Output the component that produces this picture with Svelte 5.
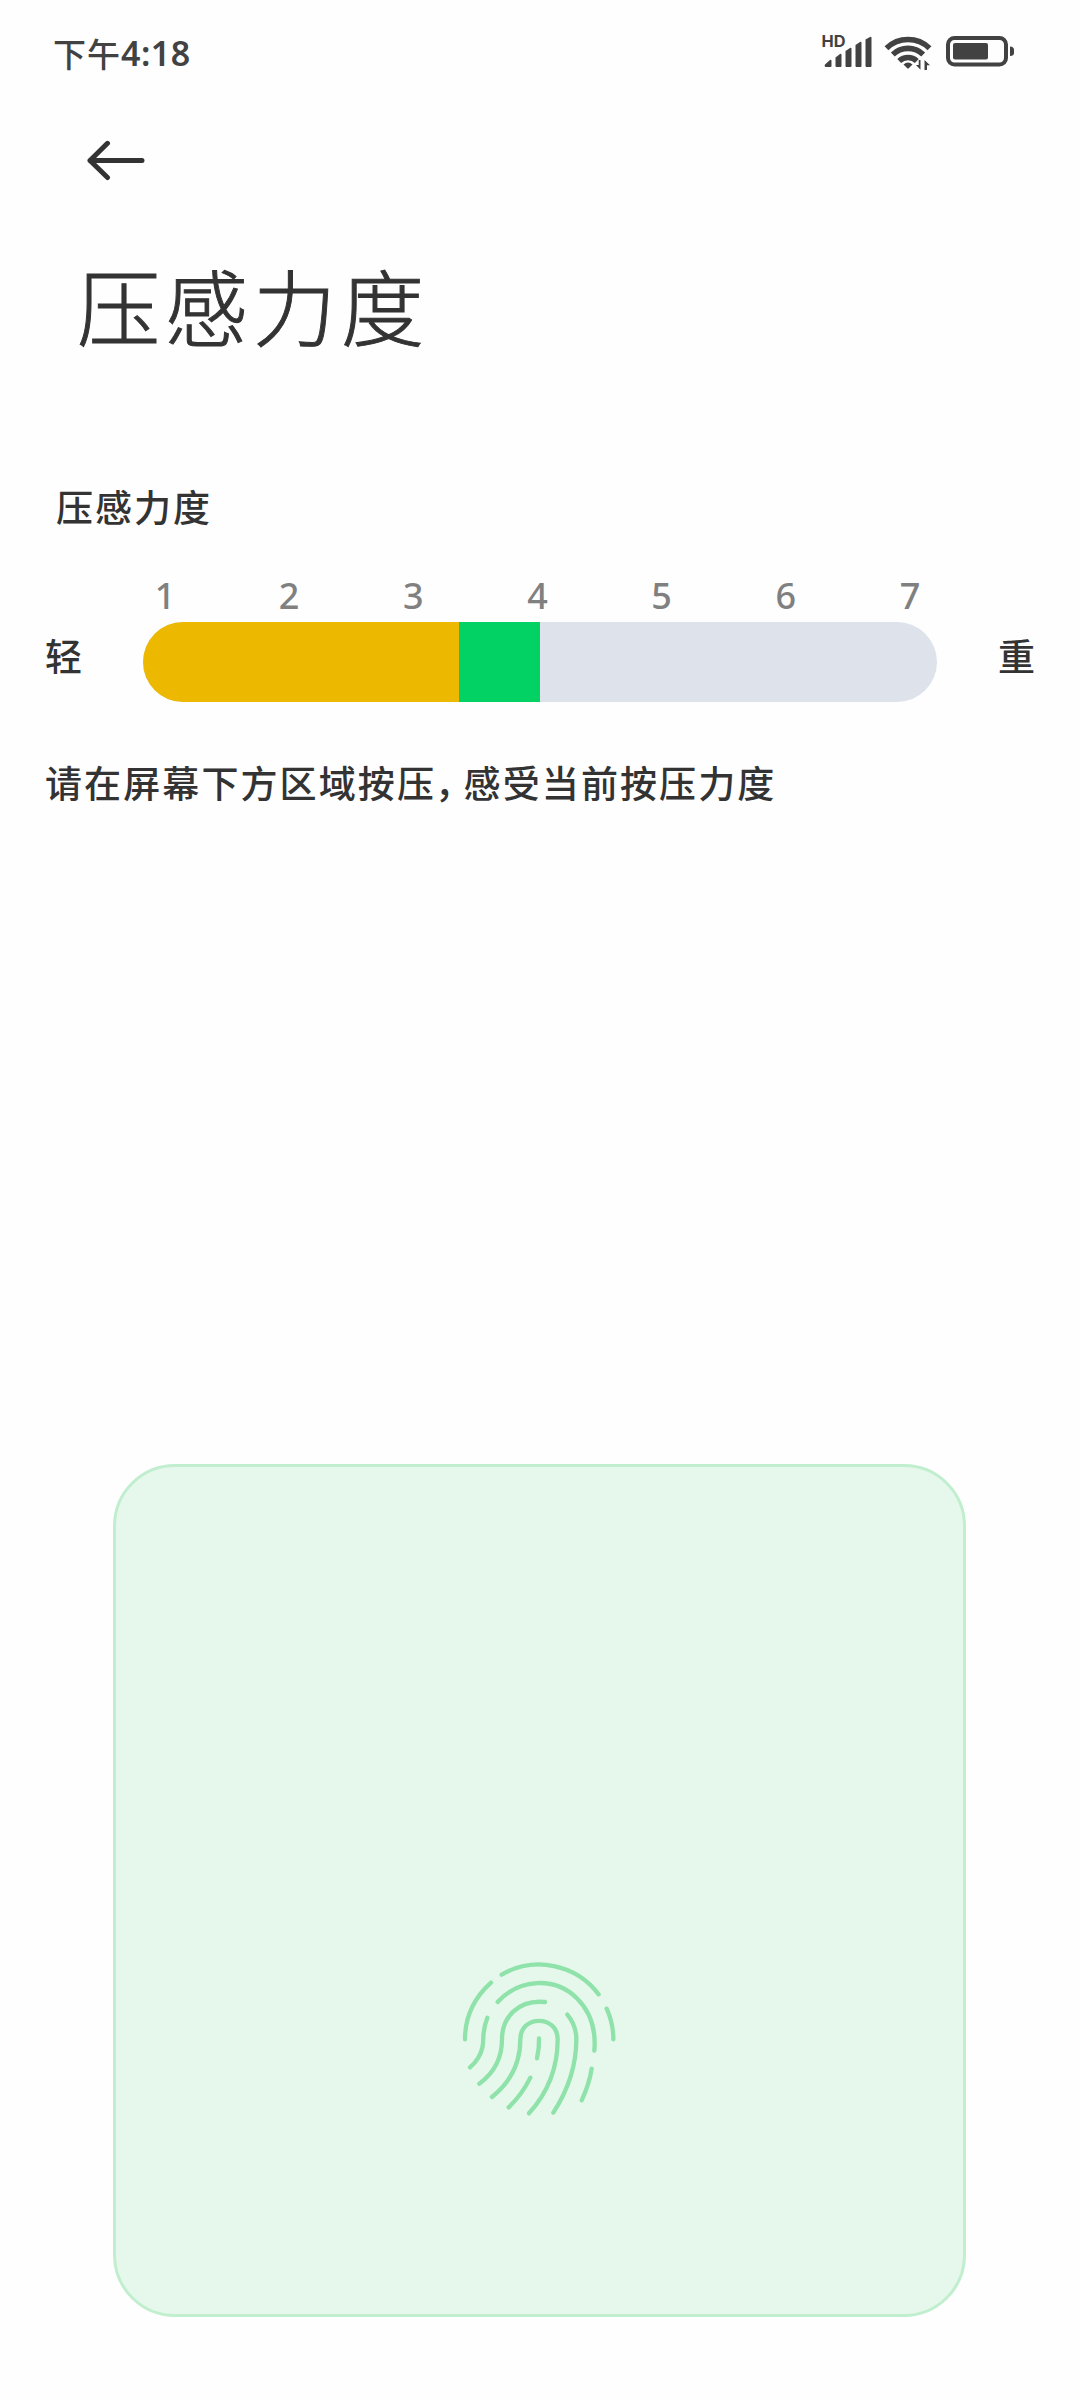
<script lang="ts">
  const levels = [1, 2, 3, 4, 5, 6, 7];

  // share of the track, in percent
  let threshold = $state(39.8);
  let pressure = $state(50);
</script>

<div class="screen">
  <header class="status">
    <div class="status__time"><span>下午</span><span class="status__clock">4:18</span></div>
    <div class="status__icons">
      <svg class="signal" width="52" height="34" viewBox="0 0 52 34" aria-hidden="true">
        <text class="signal__hd" x="-0.500" y="12" textLength="24" lengthAdjust="spacingAndGlyphs">HD</text>
        <path d="M3 29.5L8 25Q9.500 24 9.500 26V31Q9.500 32 8.500 32H4Q2 32 3 29.500ZM13.500 22.500L18 19Q19.500 18 19.500 20V31Q19.500 32 18.500 32H14.500Q13.500 32 13.500 31ZM23.500 16L28 13Q29.500 12 29.500 14V31Q29.500 32 28.500 32H24.500Q23.500 32 23.500 31ZM33.500 10L38 7Q39.500 6 39.500 8V31Q39.500 32 38.500 32H34.500Q33.500 32 33.500 31ZM43.500 4.500L48 2Q49.500 1 49.500 3V31Q49.500 32 48.500 32H44.500Q43.500 32 43.500 31Z" />
      </svg>
      <svg class="wifi" width="48" height="38" viewBox="0 0 48 38" aria-hidden="true">
        <g fill="none" stroke="currentColor" stroke-width="5.600">
          <path d="M2.500 13.200A31 31 0 0 1 45.500 13.200" />
          <path d="M8.800 19.500A22 22 0 0 1 39.200 19.500" />
          <path d="M15.200 26A13 13 0 0 1 32.800 26" />
        </g>
        <path d="M19.500 29.500Q24 25.500 28.500 29.500L25 33Q24 34 23 33Z" />
        <path d="M36.500 25V34.800L32 30H34.700V25ZM40.500 35V25L46 30.300H43V35Z" />
      </svg>
      <svg class="battery" width="70" height="34" viewBox="0 0 70 34" aria-hidden="true">
        <rect x="2" y="3" width="58" height="26.500" rx="6.500" fill="none" stroke="currentColor" stroke-width="4" />
        <rect x="7" y="8" width="35" height="16.500" rx="2" />
        <path d="M64 11.500Q68 11.500 68 15V18Q68 21 64 21Z" />
      </svg>
    </div>
  </header>

  <button class="back" aria-label="返回">
    <svg width="60" height="42" viewBox="0 0 60 42" fill="none" stroke="currentColor" stroke-width="5" stroke-linecap="round" stroke-linejoin="round">
      <path d="M56 20.500H4M21.500 3.300L4 20.500L21.500 37.500" />
    </svg>
  </button>

  <h1 class="title">压感力度</h1>

  <main class="content">
    <h2 class="label">压感力度</h2>
    <div class="meter">
      <span class="meter__end">轻</span>
      <div class="meter__scale">
        <div class="meter__levels">
          {#each levels as level}
            <span>{level}</span>
          {/each}
        </div>
        <div class="track">
          <div class="track__low" style="width: {threshold}%"></div>
          <div class="track__now" style="width: {pressure - threshold}%"></div>
        </div>
      </div>
      <span class="meter__end meter__end--heavy">重</span>
    </div>
    <p class="hint">请在屏幕下方区域按压<span class="hint__comma">，</span>感受当前按压力度</p>
  </main>

  <div class="pad">
    <svg width="180" height="180" viewBox="0 0 540 540" fill="none" stroke="currentColor" stroke-width="13" stroke-linecap="round" stroke-linejoin="round" aria-hidden="true">
      <path d="M155 74A223 223 0 0 1 446 133" />
      <path d="M470 176Q490 220 490 268" />
      <path d="M45 268Q45 168 123 98" />
      <path d="M143 156C208 84 316 80 382 146C426 190 438 242 433 302" />
      <path d="M112 203C93 252 104 266 97 293Q89 327 60 352" />
      <path d="M285 156C205 148 156 202 156 268Q156 352 88 401" />
      <path d="M126 441Q211 373 211 268C211 194 323 194 323 268Q323 396 237 490" />
      <path d="M352 194Q379 226 379 268Q379 382 310 488" />
      <path d="M267 265Q268 294 261 325" />
      <path d="M241 383Q216 434 176 472" />
      <path d="M425 356Q418 402 395 451" />
    </svg>
  </div>
</div>

<style>
  :global(body) { background: #fefefe; }
  .screen { box-sizing: border-box; width: 1080px; height: 2400px; display: flex; flex-direction: column; overflow: hidden; background: #fefefe; color: #333; font-family: 'Noto Sans', 'Noto Sans CJK SC', sans-serif; }

  .status { display: flex; justify-content: space-between; align-items: flex-start; height: 106px; padding: 34px 64px 0 53px; box-sizing: border-box; color: #424242; }
  .status__time { display: flex; align-items: center; height: 38px; font-size: 33px; font-weight: 500; letter-spacing: 1px; line-height: 38px; font-family: 'Noto Sans CJK SC', sans-serif; }
  .status__clock { font-family: 'Noto Sans', sans-serif; font-size: 34px; font-weight: 600; letter-spacing: 0.5px; }
  .status__icons { display: flex; align-items: flex-start; margin-top: 1px; }
  .status__icons svg { fill: currentColor; overflow: visible; }
  .signal__hd { font-family: 'Inter', sans-serif; font-size: 16px; font-weight: 700; }
  .wifi { margin-left: 10px; }
  .battery { margin-left: 14px; }

  .back { align-self: flex-start; margin: 34px 0 0 86px; padding: 0; border: 0; background: none; color: #333; line-height: 0; }
  .title { margin: 72px 0 0 77px; font-family: 'Noto Sans CJK SC', sans-serif; font-size: 83px; font-weight: 300; line-height: 100px; letter-spacing: 5px; -webkit-text-stroke: 1px #333; }

  .content { padding: 124px 44px 0; font-size: 37px; font-weight: 500; font-family: 'Noto Sans CJK SC', sans-serif; }
  .label { margin: 0 0 0 12px; font-size: 37px; font-weight: 500; line-height: 56px; letter-spacing: 2px; }
  .meter { display: flex; align-items: flex-end; margin-top: 41px; }
  .meter__end { width: 98px; margin-left: 1px; line-height: 50px; margin-bottom: 22px; }
  .meter__end--heavy { width: auto; margin-left: 61px; }
  .meter__scale { width: 794px; }
  .meter__levels { display: flex; justify-content: space-between; margin: 0 15px 0 10px; height: 47px; color: #808080; font-family: 'Noto Sans', sans-serif; font-size: 36px; line-height: 41px; }
  .meter__levels span { width: 24px; text-align: center; }
  .track { display: flex; height: 80px; border-radius: 40px; overflow: hidden; background: #dee2eb; }
  .track__low { background: #edb800; }
  .track__now { background: #02d163; }
  .hint { margin: 52px 0 0 1px; line-height: 56px; letter-spacing: 2.100px; white-space: nowrap; }
  .hint__comma { margin: 0 8px 0 -1px; font-feature-settings: 'halt'; }

  .pad { display: flex; justify-content: center; align-items: flex-end; box-sizing: border-box; width: 853px; height: 853px; margin: auto 0 83px 113px; padding-bottom: 184px; border: 3px solid #c0eecf; border-radius: 62px; background: #e6f8ec; color: #8fe2aa; }
</style>
